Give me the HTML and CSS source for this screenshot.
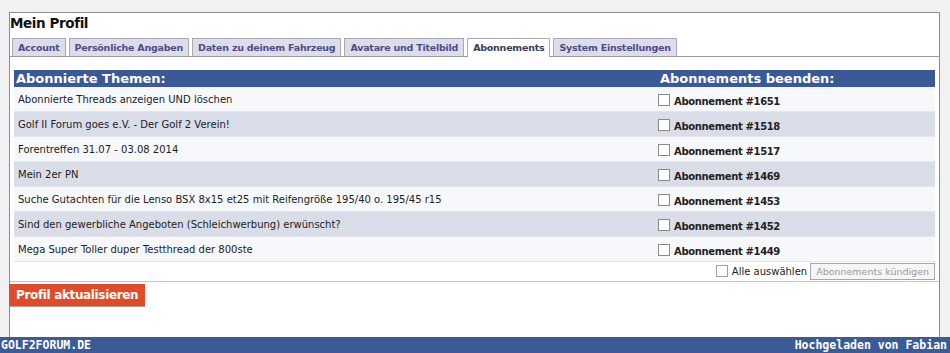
FILE: index.html
```html
<!DOCTYPE html>
<html>
	<head>
		<meta charset="UTF-8">
		<title>Mein Profil</title>
		<link rel="stylesheet" href="styles.css">
	</head>
	<body>
		<div class="page">
			<h3 class="title">Mein Profil</h3>
			<div class="tabs">
				<div class="tab">Account</div>
				<div class="tab">Persönliche Angaben</div>
				<div class="tab">Daten zu deinem Fahrzeug</div>
				<div class="tab">Avatare und Titelbild</div>
				<div class="tab active">Abonnements</div>
				<div class="tab">System Einstellungen</div>
			</div>
			<div class="tabcontent">
				<table class="subs">
					<tr class="head">
						<th class="col1">Abonnierte Themen:</th>
						<th class="col2">Abonnements beenden:</th>
					</tr>
					<tr class="light">
						<td>Abonnierte Threads anzeigen UND löschen</td>
						<td class="end"><span class="cb"></span>Abonnement #1651</td>
					</tr>
					<tr class="dark">
						<td>Golf II Forum goes e.V. - Der Golf 2 Verein!</td>
						<td class="end"><span class="cb"></span>Abonnement #1518</td>
					</tr>
					<tr class="light">
						<td>Forentreffen 31.07 - 03.08 2014</td>
						<td class="end"><span class="cb"></span>Abonnement #1517</td>
					</tr>
					<tr class="dark">
						<td>Mein 2er PN</td>
						<td class="end"><span class="cb"></span>Abonnement #1469</td>
					</tr>
					<tr class="light">
						<td>Suche Gutachten für die Lenso BSX 8x15 et25 mit Reifengröße 195/40 o. 195/45 r15</td>
						<td class="end"><span class="cb"></span>Abonnement #1453</td>
					</tr>
					<tr class="dark">
						<td>Sind den gewerbliche Angeboten (Schleichwerbung) erwünscht?</td>
						<td class="end"><span class="cb"></span>Abonnement #1452</td>
					</tr>
					<tr class="light">
						<td>Mega Super Toller duper Testthread der 800ste</td>
						<td class="end"><span class="cb"></span>Abonnement #1449</td>
					</tr>
					<tr class="foot">
						<td colspan="2">
							<div class="actions">
								<span class="cb"></span><span class="all">Alle auswählen</span>
								<button class="kill" disabled>Abonnements kündigen</button>
							</div>
						</td>
					</tr>
				</table>
			</div>
			<button class="save">Profil aktualisieren</button>
		</div>
		<div class="bar">
			<span>GOLF2FORUM.DE</span>
			<span>Hochgeladen von Fabian</span>
		</div>
	</body>
</html>
```
FILE: styles.css
```css
body{
	margin: 0;
	background: #f1f1f4;
	font-family: "DejaVu Sans", Verdana, sans-serif;
	font-size: 10px;
	color: #222;
}
.page{
	margin: 12px 10px 0 9px;
	height: 325px;
	background: #fff;
	border: 1px solid #8c8c8c;
	border-bottom: none;
	box-sizing: border-box;
}
.title{
	margin: 0;
	padding: 2px 0 0 0;
	height: 23px;
	font-size: 13.5px;
	letter-spacing: -0.4px;
	color: #111;
}
/* reiter */
.tabs{
	display: flex;
	gap: 3px;
	padding-left: 2px;
	border-bottom: 1px solid #9a9a9a;
	height: 18px;
}
.tab{
	background: #dcdcea;
	border: 1px solid #a8a8b8;
	border-bottom: none;
	padding: 0 5px;
	line-height: 17px;
	font-size: 9.5px;
	letter-spacing: -0.24px;
	font-weight: bold;
	color: #4c4c86;
}
.tab.active{
	background: #fff;
	height: 18px;
	color: #3c3c5c;
}
.tabcontent{
	padding: 13px 4px 1px 4px;
	border-bottom: 1px solid #c4c4c4;
}
.subs{
	width: 100%;
	border-collapse: collapse;
}
.head th{
	background: #3b5897;
	color: #fff;
	font-size: 13px;
	text-align: left;
	height: 17px;
	padding: 0;
	line-height: 17px;
}
.col1{
	padding-left: 2px !important;
}
.col2{
	width: 275px;
	padding-left: 2px !important;
}
.subs td{
	height: 24px;
	padding: 0 0 0 4px;
	border-bottom: 1px solid #e4e6ec;
}
.light td{
	background: #f6f8fc;
}
.dark td{
	background: #d9dde7;
}
td.end{
	font-weight: bold;
	letter-spacing: -0.35px;
	padding-left: 0;
	padding-top: 2px;
	height: 22px;
}
.cb{
	display: inline-block;
	width: 10px;
	height: 10px;
	border: 1px solid #8a8a8a;
	background: #fff;
	margin-right: 4px;
	vertical-align: -1px;
}
.foot td{
	height: 18px;
	border-bottom: none;
	background: #fff;
}
.actions{
	display: flex;
	justify-content: flex-end;
	align-items: center;
	font-size: 10px;
}
.actions .cb{
	border-color: #a0a0a0;
}
.all{
	margin-right: 3px;
}
.kill{
	font-family: "DejaVu Sans", Verdana, sans-serif;
	font-size: 9.5px;
	color: #999;
	background: #f6f6f6;
	border: 1px solid #a8a8a8;
	height: 17px;
	padding: 0 5px;
	margin-right: 0;
}
.save{
	margin: 2px 0 0 -1px;
	background: #e04b28;
	color: #fff;
	border: none;
	border-bottom: 1px solid #b0a0a0;
	font-family: "DejaVu Sans", Verdana, sans-serif;
	font-weight: bold;
	font-size: 12px;
	letter-spacing: -0.35px;
	height: 23px;
	padding: 0 7px;
}
.bar{
	height: 16px;
	background: #3c5a98;
	color: #fff;
	font-family: "DejaVu Sans Mono", monospace;
	font-weight: bold;
	font-size: 11.5px;
	display: flex;
	justify-content: space-between;
	align-items: center;
	padding: 0 3px 0 1px;
}
```
